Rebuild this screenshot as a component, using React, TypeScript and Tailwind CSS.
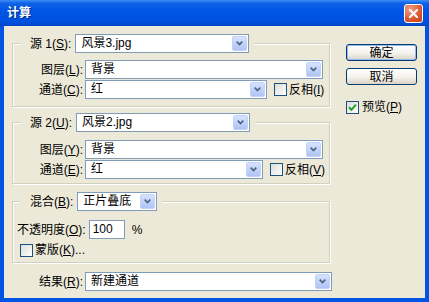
import React from "react";

const K = ({ children }: { children: string }) => (
  <span className="underline underline-offset-[1px]">{children}</span>
);

function Combo({ value, w }: { value: string; w: string }) {
  return (
    <div className={`flex h-[19px] shrink-0 border border-[#7F9DB9] bg-white ${w}`}>
      <span className="flex-1 truncate pl-[5px] leading-[17px]">{value}</span>
      <span className="m-px flex w-[15px] items-center justify-center rounded-[2px] border border-[#C2D2F7] bg-[linear-gradient(180deg,#D6E2FE,#AFC3F5)]">
        <svg width="7" height="5" viewBox="0 0 7 5">
          <path d="M0.7 0.7 3.5 3.5 6.3 0.7" fill="none" stroke="#4D6185" strokeWidth="1.7" />
        </svg>
      </span>
    </div>
  );
}

function Box({ on }: { on?: boolean }) {
  return (
    <span className="flex size-[13px] shrink-0 items-center justify-center border border-[#1C5180] bg-[linear-gradient(135deg,#DCDCD7,#FFFFFF)]">
      {on && (
        <svg width="9" height="9" viewBox="0 0 9 9">
          <path d="M1 4.3 3.4 6.8 8 1.6" fill="none" stroke="#21A121" strokeWidth="2" />
        </svg>
      )}
    </span>
  );
}

function Btn({ children, def }: { children: React.ReactNode; def?: boolean }) {
  return (
    <div
      className={`flex h-[17px] w-[71px] items-center justify-center rounded-[3px] border border-[#003C74] bg-[linear-gradient(180deg,#FFFFFF,#F3F2EC_55%,#D9D3C7)] ${
        def ? "shadow-[inset_0_0_0_1px_#9DB8EA]" : ""
      }`}
    >
      {children}
    </div>
  );
}

function Group({ legend, children, className }: { legend: React.ReactNode; children: React.ReactNode; className: string }) {
  return (
    <fieldset className={`w-[318px] border border-[#D0D0BF] shadow-[1px_1px_0_#fff,inset_1px_1px_0_#fff] ${className}`}>
      <legend className="ml-[7px] bg-[#ECE9D8] pl-[10px] pr-[5px]">
        <div className="flex items-center gap-[4px]">{legend}</div>
      </legend>
      {children}
    </fieldset>
  );
}

function Row({ label, children }: { label: React.ReactNode; children: React.ReactNode }) {
  return (
    <div className="flex h-[19px] items-center">
      <span className="w-[70px] text-right">{label}</span>
      <div className="ml-[2px] flex items-center">{children}</div>
    </div>
  );
}

export default function App() {
  return (
    <div className="flex h-[302px] w-[429px] flex-col bg-[#0054E3] font-['Tahoma','Liberation_Sans','Noto_Sans_CJK_SC',sans-serif] text-[12px] text-black">
      <div className="flex h-[26px] items-center justify-between bg-[linear-gradient(180deg,#3D8FF7_0%,#1163E6_12%,#0055E5_40%,#0052DE_85%,#0045C6_100%)] pl-[7px] pr-[6px]">
        <span className="font-bold text-white [text-shadow:1px_1px_0_#0A2A8A]">计算</span>
        <span className="flex size-[19px] items-center justify-center rounded-[3px] border border-white bg-[radial-gradient(circle_at_30%_25%,#F2A084,#DB5630_60%,#C23D19)]">
          <svg width="9" height="9" viewBox="0 0 9 9">
            <path d="M1 1 8 8M8 1 1 8" stroke="#fff" strokeWidth="2" strokeLinecap="square" />
          </svg>
        </span>
      </div>

      <div className="mx-[4px] mb-[4px] flex flex-1 bg-[#ECE9D8] pl-[8px]">
        <div className="flex w-[320px] flex-col pt-[8px]">
          <Group
            className=""
            legend={
              <>
                <span>源 1(<K>S</K>):</span>
                <Combo value="风景3.jpg" w="w-[174px]" />
              </>
            }
          >
            <div className="flex flex-col gap-[1px] pb-[7px] pt-[7px]">
              <Row label={<>图层(<K>L</K>):</>}>
                <Combo value="背景" w="w-[238px]" />
              </Row>
              <Row label={<>通道(<K>C</K>):</>}>
                <Combo value="红" w="w-[182px]" />
                <span className="ml-[7px]"><Box /></span>
                <span className="ml-[2px]">反相(<K>I</K>)</span>
              </Row>
            </div>
          </Group>

          <Group
            className="mt-[6px]"
            legend={
              <>
                <span>源 2(<K>U</K>):</span>
                <Combo value="风景2.jpg" w="w-[174px]" />
              </>
            }
          >
            <div className="flex flex-col gap-[1px] pb-[4px] pt-[8px]">
              <Row label={<>图层(<K>Y</K>):</>}>
                <Combo value="背景" w="w-[238px]" />
              </Row>
              <Row label={<>通道(<K>E</K>):</>}>
                <Combo value="红" w="w-[178px]" />
                <span className="ml-[7px]"><Box /></span>
                <span className="ml-[2px]">反相(<K>V</K>)</span>
              </Row>
            </div>
          </Group>

          <Group
            className="mt-[8px]"
            legend={
              <>
                <span>混合(<K>B</K>):</span>
                <Combo value="正片叠底" w="w-[80px]" />
              </>
            }
          >
            <div className="flex flex-col pb-[5px] pl-[4px] pt-[9px]">
              <div className="flex h-[19px] items-center">
                <span>不透明度(<K>O</K>):</span>
                <span className="ml-[3px] h-[19px] w-[36px] border border-[#7F9DB9] bg-white pl-[3px] leading-[17px]">100</span>
                <span className="ml-[7px]">%</span>
              </div>
              <div className="mt-[4px] flex h-[14px] items-center pl-[3px]">
                <Box />
                <span className="ml-[2px]">蒙版(<K>K</K>)...</span>
              </div>
            </div>
          </Group>

          <div className="mt-[9px] flex h-[19px] items-center">
            <span className="w-[71px] text-right">结果(<K>R</K>):</span>
            <span className="ml-[2px]">
              <Combo value="新建通道" w="w-[247px]" />
            </span>
          </div>
        </div>

        <div className="ml-[14px] flex flex-col pt-[18px]">
          <Btn def>确定</Btn>
          <div className="mt-[7px]">
            <Btn>取消</Btn>
          </div>
          <div className="mt-[13px] flex items-center">
            <Box on />
            <span className="ml-[3px]">预览(<K>P</K>)</span>
          </div>
        </div>
      </div>
    </div>
  );
}
